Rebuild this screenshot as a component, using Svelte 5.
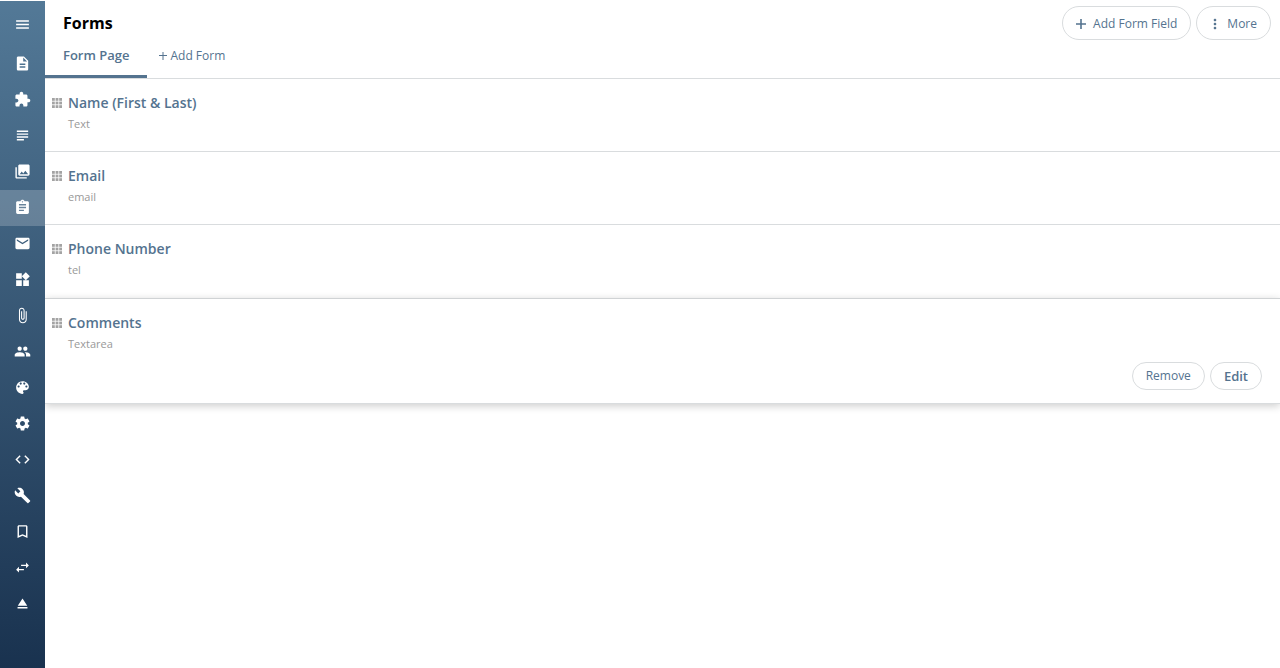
<script>
  const nav = [
    { label: 'Pages', d: 'M14 2H6c-1.1 0-2 .9-2 2v16c0 1.1.9 2 2 2h12c1.1 0 2-.9 2-2V8l-6-6zm2 16H8v-2h8v2zm0-4H8v-2h8v2zm-3-5V3.500L18.500 9H13z' },
    { label: 'Plugins', d: 'M20.500 11H19V7c0-1.100-.9-2-2-2h-4V3.500C13 2.120 11.880 1 10.500 1S8 2.120 8 3.500V5H4c-1.100 0-1.990.9-1.990 2v3.800H3.500c1.490 0 2.700 1.210 2.700 2.700s-1.210 2.700-2.700 2.700H2V20c0 1.100.9 2 2 2h3.800v-1.500c0-1.490 1.210-2.700 2.700-2.700s2.700 1.210 2.700 2.700V22H17c1.100 0 2-.9 2-2v-4h1.500c1.380 0 2.500-1.120 2.500-2.500S21.880 11 20.500 11z' },
    { label: 'Posts', d: 'M14 17H4v2h10v-2zm6-8H4v2h16V9zM4 15h16v-2H4v2zM4 5v2h16V5H4z' },
    { label: 'Galleries', d: 'M22 16V4c0-1.100-.9-2-2-2H8c-1.100 0-2 .9-2 2v12c0 1.100.9 2 2 2h12c1.100 0 2-.9 2-2zm-11-4l2.030 2.710L16 11l4 5H8l3-4zM2 6v14c0 1.100.9 2 2 2h14v-2H4V6H2z' },
    { label: 'Forms', active: true, d: 'M19 3h-4.180C14.400 1.840 13.300 1 12 1s-2.400.84-2.820 2H5c-1.100 0-2 .9-2 2v14c0 1.100.9 2 2 2h14c1.100 0 2-.9 2-2V5c0-1.100-.9-2-2-2zm-7 0c.55 0 1 .45 1 1s-.45 1-1 1-1-.45-1-1 .45-1 1-1zm2 14H7v-2h7v2zm3-4H7v-2h10v2zm0-4H7V7h10v2z' },
    { label: 'Mail', d: 'M20 4H4c-1.100 0-1.990.9-1.990 2L2 18c0 1.100.9 2 2 2h16c1.100 0 2-.9 2-2V6c0-1.100-.9-2-2-2zm0 4l-8 5-8-5V6l8 5 8-5v2z' },
    { label: 'Widgets', d: 'M13 13v8h8v-8h-8zM3 21h8v-8H3v8zM3 3v8h8V3H3zm13.660-1.310L11 7.340 16.660 13l5.660-5.660-5.660-5.650z' },
    { label: 'Files', d: 'M16.500 6v11.500c0 2.210-1.790 4-4 4s-4-1.790-4-4V5c0-1.380 1.120-2.500 2.500-2.500s2.500 1.120 2.500 2.500v10.500c0 .55-.45 1-1 1s-1-.45-1-1V6H10v9.500c0 1.380 1.120 2.500 2.500 2.500s2.500-1.120 2.500-2.500V5c0-2.210-1.790-4-4-4S7 2.790 7 5v12.500c0 3.040 2.460 5.500 5.500 5.500s5.500-2.460 5.500-5.500V6h-1.500z' },
    { label: 'Users', d: 'M16 11c1.660 0 2.990-1.340 2.990-3S17.660 5 16 5c-1.660 0-3 1.340-3 3s1.340 3 3 3zm-8 0c1.660 0 2.990-1.340 2.990-3S9.660 5 8 5C6.340 5 5 6.340 5 8s1.340 3 3 3zm0 2c-2.330 0-7 1.170-7 3.500V19h14v-2.500c0-2.330-4.670-3.500-7-3.500zm8 0c-.29 0-.62.02-.97.05 1.160.84 1.970 1.970 1.970 3.450V19h6v-2.500c0-2.330-4.670-3.500-7-3.500z' },
    { label: 'Theme', d: 'M12 3c-4.970 0-9 4.030-9 9s4.030 9 9 9c.83 0 1.500-.67 1.500-1.500 0-.39-.15-.74-.39-1.010-.23-.26-.38-.61-.38-.99 0-.83.67-1.500 1.500-1.500H16c2.760 0 5-2.240 5-5 0-4.420-4.030-8-9-8zm-5.500 9c-.83 0-1.500-.67-1.500-1.500S5.670 9 6.500 9 8 9.670 8 10.500 7.330 12 6.500 12zm3-4C8.670 8 8 7.330 8 6.500S8.670 5 9.500 5s1.500.67 1.500 1.500S10.330 8 9.500 8zm5 0c-.83 0-1.500-.67-1.500-1.500S13.670 5 14.500 5s1.500.67 1.500 1.500S15.330 8 14.500 8zm3 4c-.83 0-1.500-.67-1.500-1.500S16.670 9 17.500 9s1.500.67 1.500 1.500-.67 1.500-1.500 1.500z' },
    { label: 'Settings', d: 'M19.430 12.980c.04-.32.07-.64.07-.98s-.03-.66-.07-.98l2.110-1.650c.19-.15.24-.42.12-.64l-2-3.460c-.12-.22-.39-.3-.61-.22l-2.490 1c-.52-.4-1.080-.73-1.690-.98l-.38-2.650C14.460 2.180 14.250 2 14 2h-4c-.25 0-.46.18-.49.42l-.38 2.650c-.61.25-1.170.59-1.690.98l-2.490-1c-.23-.09-.49 0-.61.22l-2 3.460c-.13.22-.07.49.12.64l2.110 1.650c-.04.32-.07.65-.07.98s.03.66.07.98l-2.110 1.650c-.19.15-.24.42-.12.64l2 3.460c.12.22.39.3.61.22l2.490-1c.52.4 1.080.73 1.690.98l.38 2.650c.03.24.24.42.49.42h4c.25 0 .46-.18.49-.42l.38-2.650c.61-.25 1.170-.59 1.690-.98l2.490 1c.23.09.49 0 .61-.22l2-3.460c.12-.22.07-.49-.12-.64l-2.110-1.650zM12 15.500c-1.930 0-3.500-1.570-3.500-3.500s1.570-3.500 3.500-3.500 3.500 1.570 3.500 3.500-1.570 3.500-3.500 3.500z' },
    { label: 'Code', d: 'M9.400 16.600L4.800 12l4.600-4.600L8 6l-6 6 6 6 1.400-1.400zm5.200 0l4.600-4.600-4.600-4.600L16 6l6 6-6 6-1.400-1.400z' },
    { label: 'Tools', d: 'M22.700 19l-9.100-9.100c.9-2.300.4-5-1.500-6.900-2-2-5-2.400-7.400-1.300L9 6 6 9 1.600 4.700C.4 7.100.9 10.100 2.900 12.100c1.900 1.900 4.600 2.400 6.900 1.500l9.100 9.100c.4.4 1 .4 1.400 0l2.300-2.300c.5-.4.5-1.100.1-1.400z' },
    { label: 'Bookmarks', d: 'M17 3H7c-1.100 0-1.990.9-1.990 2L5 21l7-3 7 3V5c0-1.100-.9-2-2-2zm0 15l-5-2.180L7 18V5h10v13z' },
    { label: 'Redirects', d: 'M6.990 11L3 15l3.990 4v-3H14v-2H6.990v-3zM21 9l-3.990-4v3H10v2h7.010v3L21 9z' },
    { label: 'Publish', d: 'M5 17h14v2H5zm7-12L5.330 15h13.340z' }
  ];

  const fields = [
    { name: 'Name (First & Last)', type: 'Text' },
    { name: 'Email', type: 'email' },
    { name: 'Phone Number', type: 'tel' },
    { name: 'Comments', type: 'Textarea', open: true }
  ];
</script>

<div class="app">
  <nav class="sidebar" aria-label="Main">
    <button class="menu" aria-label="Menu">
      <svg viewBox="0 0 24 24"><path d="M3 18h18v-2H3v2zm0-5h18v-2H3v2zm0-7v2h18V6H3z" /></svg>
    </button>
    {#each nav as item}
      <a href="#{item.label.toLowerCase()}" class:active={item.active} aria-label={item.label}>
        <svg viewBox="0 0 24 24"><path d={item.d} /></svg>
      </a>
    {/each}
  </nav>

  <main>
    <header>
      <div class="heading">
        <h1>Forms</h1>
        <div class="tabs">
          <a class="tab current" href="#form-page">Form Page</a>
          <a class="tab" href="#add-form">
            <svg class="small" viewBox="0 0 8 8"><path d="M0 3.500h8M4 0v8" /></svg>Add Form
          </a>
        </div>
      </div>
      <div class="actions">
        <button class="pill large">
          <svg viewBox="0 0 24 24"><path d="M19.500 13.200h-6.300v6.300h-2.400v-6.300H4.500v-2.400h6.300V4.500h2.400v6.300h6.300v2.400z" /></svg>Add Form Field
        </button>
        <button class="pill large">
          <svg viewBox="0 0 24 24"><path d="M12 8c1.100 0 2-.9 2-2s-.9-2-2-2-2 .9-2 2 .9 2 2 2zm0 2c-1.100 0-2 .9-2 2s.9 2 2 2 2-.9 2-2-.9-2-2-2zm0 6c-1.100 0-2 .9-2 2s.9 2 2 2 2-.9 2-2-.9-2-2-2z" /></svg>More
        </button>
      </div>
    </header>

    <ul>
      {#each fields as field}
        <li class:open={field.open}>
          <svg class="grip" viewBox="0 0 10 10">
            {#each [0, 3.6, 7.2] as y}
              {#each [0, 3.6, 7.2] as x}
                <rect {x} {y} width="2.8" height="2.8" />
              {/each}
            {/each}
          </svg>
          <div class="info">
            <h2>{field.name}</h2>
            <p>{field.type}</p>
            {#if field.open}
              <div class="row-actions">
                <button class="pill">Remove</button>
                <button class="pill strong">Edit</button>
              </div>
            {/if}
          </div>
        </li>
      {/each}
    </ul>
  </main>
</div>

<style>
  :global(body) {
    background: #fff;
  }

  .app {
    display: flex;
    box-sizing: border-box;
    min-height: 100vh;
    padding-top: 1px;
    font-family: 'Open Sans', sans-serif;
    font-size: 13px;
    line-height: 18px;
    color: #54738f;
  }

  .sidebar {
    position: relative;
    z-index: 1;
    display: flex;
    flex-direction: column;
    flex: none;
    width: 45px;
    background: linear-gradient(#537997, #19324f);
  }

  .sidebar a,
  .menu {
    display: flex;
    align-items: center;
    justify-content: center;
    box-sizing: border-box;
    height: 36px;
    padding: 0 0 2px;
    border: 0;
    background: none;
  }

  .sidebar .menu {
    height: 45px;
    padding: 1px 0 0;
  }

  .sidebar a.active {
    background: rgba(255, 255, 255, 0.2);
  }

  .sidebar svg {
    width: 17px;
    height: 17px;
    fill: #fff;
  }

  main {
    flex: 1;
    min-width: 0;
  }

  header {
    display: flex;
    justify-content: space-between;
    border-bottom: 1px solid #d9dcde;
  }

  h1 {
    margin: 0;
    padding: 11px 18px 0;
    font-size: 16px;
    font-weight: 700;
    line-height: 22px;
    color: #000;
  }

  .tabs {
    display: flex;
    margin-top: 12px;
  }

  .tab {
    display: flex;
    align-items: center;
    padding: 1px 12px 10px;
    border-bottom: 3px solid transparent;
    font-size: 12px;
    color: inherit;
    text-decoration: none;
  }

  .tab.current {
    padding: 0 18px 11px;
    border-color: #54738f;
    font-size: 13px;
    font-weight: 600;
  }

  .small {
    width: 8px;
    height: 8px;
    margin-right: 3px;
    fill: none;
    stroke: currentColor;
  }

  .actions {
    display: flex;
    align-items: flex-start;
    gap: 5px;
    padding: 5px 9px 0;
  }

  .pill {
    display: flex;
    align-items: center;
    box-sizing: border-box;
    height: 28px;
    padding: 0 13px;
    border: 1px solid #d9dcde;
    border-radius: 17px;
    background: #fff;
    color: inherit;
    font: inherit;
    font-size: 12px;
    white-space: nowrap;
  }

  .pill.large {
    height: 34px;
    padding: 1px 13px 0 10px;
  }

  .pill.strong {
    font-size: 13px;
    font-weight: 600;
  }

  .pill svg {
    width: 16px;
    height: 16px;
    margin-right: 4px;
    fill: currentColor;
  }

  ul {
    margin: 0;
    padding: 0;
    list-style: none;
  }

  li {
    display: flex;
    gap: 6px;
    padding: 14px 18px 19px 7px;
    border-bottom: 1px solid #d9dcde;
  }

  li:has(+ .open) {
    border-color: transparent;
  }

  li.open {
    padding-bottom: 13px;
    border-top: 1px solid #d0d3d5;
    box-shadow: 0 2px 8px rgba(0, 0, 0, 0.2);
  }

  .grip {
    flex: none;
    width: 10px;
    height: 10px;
    margin-top: 5px;
    fill: #a3a3a3;
  }

  .info {
    flex: 1;
  }

  h2 {
    margin: 0;
    font-size: 14px;
    font-weight: 600;
    line-height: 20px;
  }

  p {
    margin: 3px 0 0;
    font-size: 11px;
    line-height: 16px;
    color: #999;
  }

  .row-actions {
    display: flex;
    justify-content: flex-end;
    gap: 5px;
    margin-top: 10px;
  }
</style>
